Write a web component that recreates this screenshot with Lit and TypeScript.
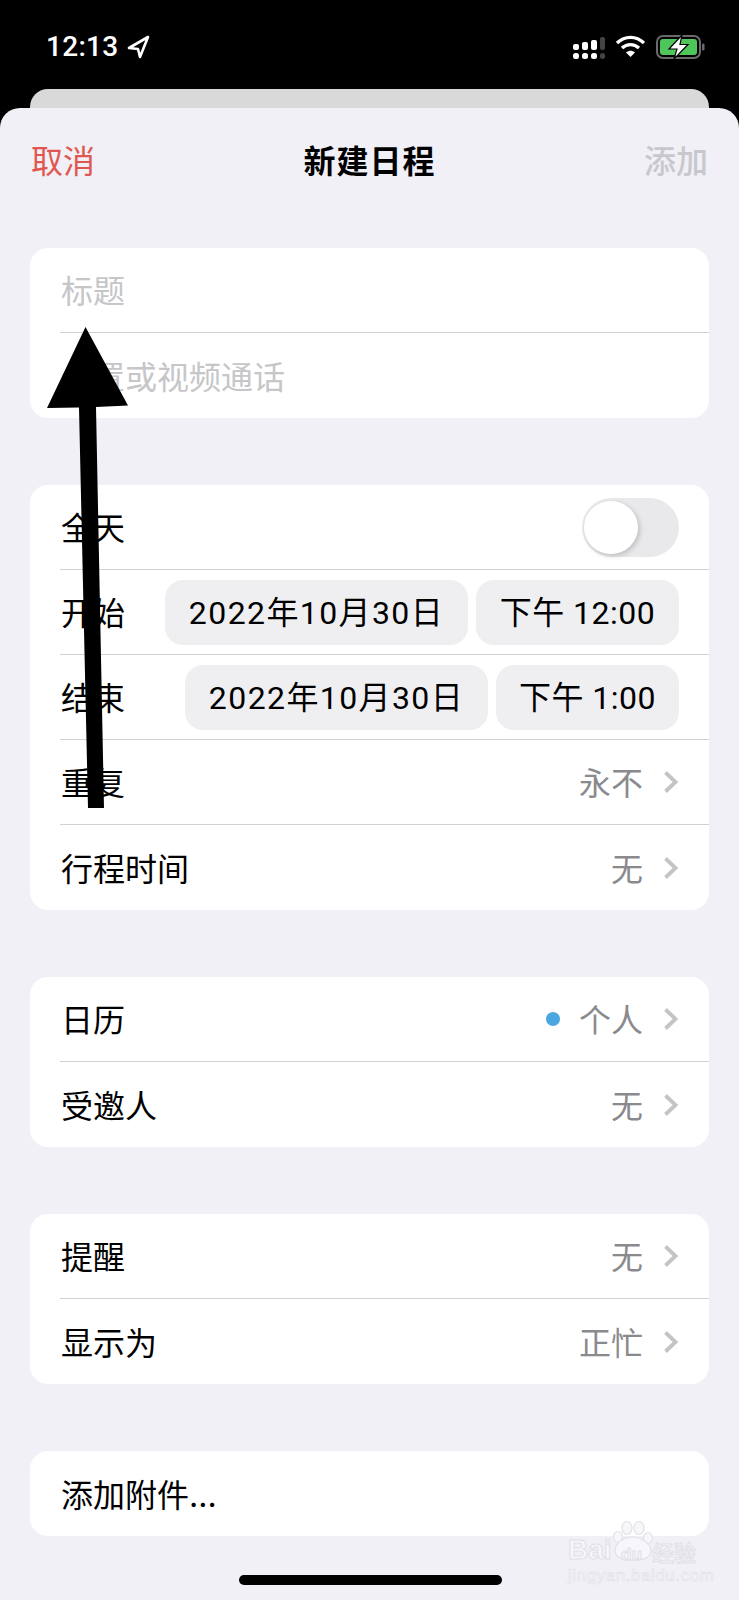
import { LitElement, html, css, svg } from 'lit';
import { customElement } from 'lit/decorators.js';

const chevron = html`<svg class="chev" width="15" height="24" viewBox="0 0 15 24"><path d="M2.5 2.5 L12.5 12 L2.5 21.5" fill="none" stroke="#c4c4c7" stroke-width="3.8"/></svg>`;

const signal = svg`
  <rect x="0" y="7" width="6" height="6" rx="2" fill="#fff"/>
  <rect x="9" y="5" width="6" height="8" rx="2" fill="#fff"/>
  <rect x="18" y="3" width="6" height="10" rx="2" fill="#fff"/>
  <rect x="27" y="0" width="5" height="13" rx="2" fill="#444"/>
  <rect x="0" y="16" width="6" height="6" rx="2.5" fill="#fff"/>
  <rect x="9" y="16" width="6" height="6" rx="2.5" fill="#fff"/>
  <rect x="18" y="16" width="6" height="6" rx="2.5" fill="#fff"/>
  <rect x="27" y="16" width="5" height="6" rx="2.5" fill="#444"/>`;

@customElement('app-root')
export class AppRoot extends LitElement {
  static styles = css`
    :host {
      display: block;
      position: relative;
      width: 739px;
      height: 1600px;
      overflow: hidden;
      background: #000;
      font-family: "Inter", "Noto Sans CJK SC", sans-serif;
      color: #000;
    }
    .status {
      height: 89px;
      display: flex;
      justify-content: space-between;
      align-items: flex-start;
      padding: 35px 34px 0 46px;
      box-sizing: border-box;
      color: #fff;
    }
    .clock {
      display: flex;
      align-items: center;
      gap: 8px;
      font-size: 28px;
      font-weight: 500;
      line-height: 24px;
      letter-spacing: 0.300px;
      font-family: "Roboto", sans-serif;
    }
    .icons {
      display: flex;
      align-items: flex-start;
      gap: 10px;
    }
    .back {
      height: 19px;
      margin: 0 30px;
      background: #d9d9da;
      border-radius: 18px 18px 0 0;
    }
    .sheet {
      height: 1492px;
      background: #f0f0f6;
      border-radius: 20px 20px 0 0;
    }
    .nav {
      height: 106px;
      box-sizing: border-box;
      padding: 0 31px 5px;
      display: flex;
      justify-content: space-between;
      align-items: center;
      font-size: 32px;
    }
    .cancel { color: #e0574f; }
    .title { font-weight: 700; letter-spacing: 1px; }
    .add { color: #c8c8cc; font-weight: 500; }
    .cards {
      display: flex;
      flex-direction: column;
      gap: 67px;
      padding: 34px 30px 0;
    }
    .card {
      background: #fff;
      border-radius: 18px;
      overflow: hidden;
    }
    .row {
      height: 85px;
      box-sizing: border-box;
      margin-left: 30px;
      padding: 0 30px 0 1px;
      display: flex;
      align-items: center;
      gap: 8px;
      border-bottom: 1px solid #d2d2d6;
      font-size: 32px;
    }
    .row:last-child { border-bottom: none; }
    .label { flex: 1; padding-bottom: 2px; }
    .hint { color: #c6c6c9; }
    .value {
      color: #8a8a8e;
      margin-right: 12px;
      padding-bottom: 2px;
    }
    .chev { margin-right: 1px; }
    .dot {
      width: 14px;
      height: 14px;
      border-radius: 50%;
      background: #4ba7e0;
      margin-right: 11px;
    }
    .pill {
      height: 65px;
      box-sizing: border-box;
      padding-bottom: 5px;
      background: #efeff1;
      border-radius: 18px;
      display: flex;
      align-items: center;
      justify-content: center;
      font-family: "Roboto", "Noto Sans CJK SC", sans-serif;
      font-size: 32px;
    }
    .date { width: 303px; letter-spacing: 1.400px; }
    .time-long { width: 203px; letter-spacing: 0.500px; }
    .time-short { width: 183px; letter-spacing: 0.500px; }
    .pair { display: flex; gap: 8px; }
    .toggle {
      width: 97px;
      height: 59px;
      border-radius: 30px;
      background: #e9e9eb;
      position: relative;
    }
    .knob {
      position: absolute;
      left: 2px;
      top: 3px;
      width: 54px;
      height: 53px;
      border-radius: 50%;
      background: #fff;
      box-shadow: 2px 2px 5px rgba(0, 0, 0, 0.18);
    }
    .arrow {
      position: absolute;
      left: 40px;
      top: 320px;
    }
    .home {
      position: absolute;
      left: 239px;
      top: 1575px;
      width: 263px;
      height: 10px;
      border-radius: 5px;
      background: #000;
    }
    .mark {
      position: absolute;
      left: 566px;
      top: 1518px;
      width: 134px;
      height: 66px;
      color: #f7f7fb;
      -webkit-text-stroke: 1px #e0e0e6;
    }
    .mark span { position: absolute; white-space: nowrap; line-height: 1; }
    .mark .bai { left: 2px; top: 18px; font: 700 28px/1 "Liberation Sans", sans-serif; }
    .mark .du { left: 55px; top: 28px; font: 700 17px/1 "Liberation Sans", sans-serif; }
    .mark .jy { left: 86px; top: 22px; font: 500 22px/1 "Noto Sans CJK SC", sans-serif; }
    .mark .url { left: 2px; top: 49px; font: 400 17px/1 "Liberation Sans", sans-serif; letter-spacing: 0.550px; -webkit-text-stroke: 0.600px #e0e0e6; }
    .mark svg { position: absolute; left: 46px; top: 2px; }
  `;

  valueRow(label: string, value: string, dot = false) {
    return html`<div class="row">
      <span class="label">${label}</span>
      ${dot ? html`<span class="dot"></span>` : ''}
      <span class="value">${value}</span>
      ${chevron}
    </div>`;
  }

  render() {
    return html`
      <div class="status">
        <div class="clock">
          <span>12:13</span>
          <svg width="23" height="24" viewBox="0 0 23 24"><path d="M21 2 L2 13 L11 14 L13 22 Z" fill="none" stroke="#fff" stroke-width="2.6" stroke-linejoin="round"/></svg>
        </div>
        <div class="icons">
          <svg width="32" height="23" viewBox="0 0 32 23" style="margin-top:2px">${signal}</svg>
          <svg width="31" height="23" viewBox="0 0 31 23">
            <path d="M2 8 C10 0.5 21 0.5 29 8" fill="none" stroke="#fff" stroke-width="3.4"/>
            <path d="M7 13 C12 8.5 19 8.5 24 13" fill="none" stroke="#fff" stroke-width="3.4"/>
            <path d="M11 17.5 C14 15 17 15 20 17.5 L15.5 22 Z" fill="#fff"/>
          </svg>
          <svg width="49" height="24" viewBox="0 0 49 24">
            <rect x="1" y="1" width="43" height="22" rx="6" fill="none" stroke="#6a6a6a" stroke-width="2"/>
            <rect x="4" y="4" width="37" height="16" rx="3" fill="#4fc65a"/>
            <rect x="46" y="8.5" width="2.5" height="7" rx="1.2" fill="#6a6a6a"/>
            <path d="M26 0 L13 14 L21 14 L18 24 L32 9.5 L24 9.5 Z" fill="#fff" stroke="#000" stroke-width="1.2"/>
          </svg>
        </div>
      </div>
      <div class="back"></div>
      <div class="sheet">
        <div class="nav">
          <span class="cancel">取消</span>
          <span class="title">新建日程</span>
          <span class="add">添加</span>
        </div>
        <div class="cards">
          <div class="card">
            <div class="row"><span class="label hint">标题</span></div>
            <div class="row"><span class="label hint">位置或视频通话</span></div>
          </div>
          <div class="card">
            <div class="row">
              <span class="label">全天</span>
              <div class="toggle"><div class="knob"></div></div>
            </div>
            <div class="row">
              <span class="label">开始</span>
              <div class="pair">
                <div class="pill date">2022年10月30日</div>
                <div class="pill time-long">下午 12:00</div>
              </div>
            </div>
            <div class="row">
              <span class="label">结束</span>
              <div class="pair">
                <div class="pill date">2022年10月30日</div>
                <div class="pill time-short">下午 1:00</div>
              </div>
            </div>
            ${this.valueRow('重复', '永不')}
            ${this.valueRow('行程时间', '无')}
          </div>
          <div class="card">
            ${this.valueRow('日历', '个人', true)}
            ${this.valueRow('受邀人', '无')}
          </div>
          <div class="card">
            ${this.valueRow('提醒', '无')}
            ${this.valueRow('显示为', '正忙')}
          </div>
          <div class="card">
            <div class="row"><span class="label">添加附件...</span></div>
          </div>
        </div>
      </div>
      <svg class="arrow" width="96" height="492" viewBox="0 0 96 492">
        <path d="M45.5 7 L7 88 L39 87.5 L48 488 L64 488 L56 87 L88 85.500 Z" fill="#000"/>
      </svg>
      <div class="home"></div>
      <div class="mark">
        <svg width="42" height="42" viewBox="0 0 42 42" fill="#f7f7fb" stroke="#e0e0e6" stroke-width="1.2">
          <ellipse cx="15" cy="8" rx="5" ry="6.500"/>
          <ellipse cx="27" cy="8" rx="5" ry="6.500"/>
          <ellipse cx="6" cy="17" rx="4.500" ry="5.500"/>
          <ellipse cx="36" cy="18" rx="4.500" ry="5.500"/>
          <path d="M3 31 C3 22 13 17 21 17 C29 17 39 23 39 31 C39 38 30 40 21 40 C12 40 3 38 3 31 Z"/>
        </svg>
        <span class="bai">Bai</span>
        <span class="du">du</span>
        <span class="jy">经验</span>
        <span class="url">jingyan.baidu.com</span>
      </div>
    `;
  }
}
